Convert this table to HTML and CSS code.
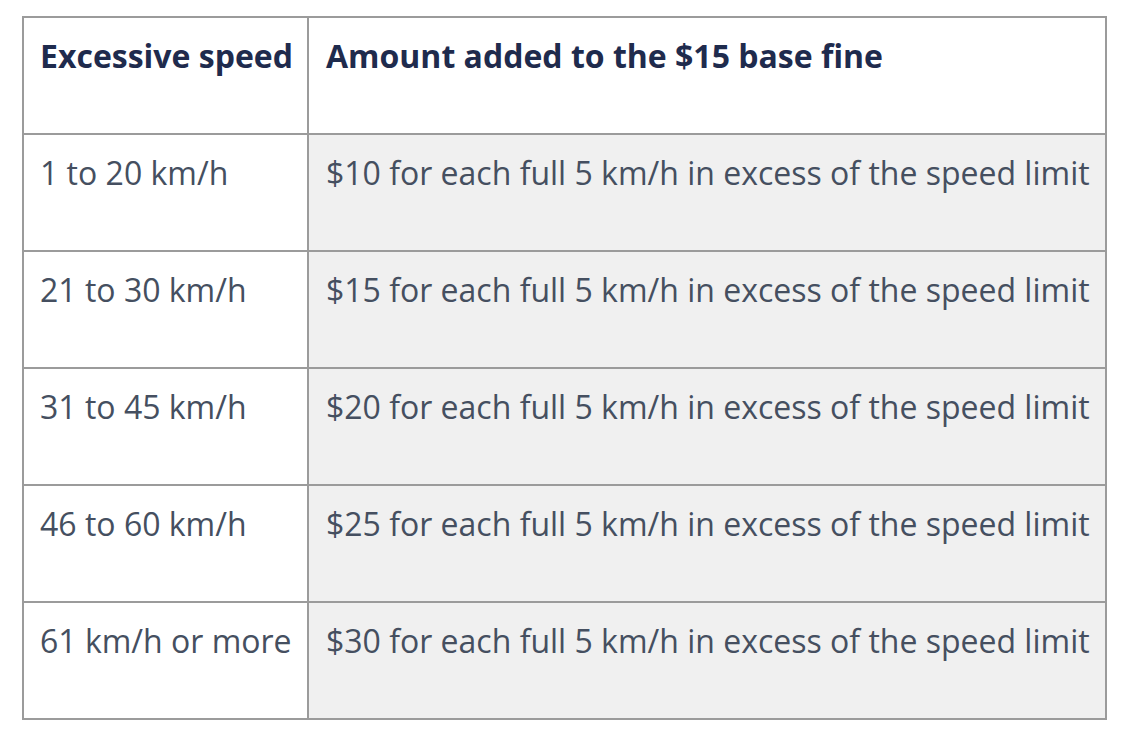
FILE: index.html
```html
<!DOCTYPE html>
<html>
<head>
<meta charset="utf-8">
<link rel="stylesheet" href="styles.css">
</head>
<body>
<table class="fines">
  <thead>
    <tr>
      <th class="col-speed">Excessive speed</th>
      <th class="col-amt">Amount added to the $15 base fine</th>
    </tr>
  </thead>
  <tbody>
    <tr><td class="speed">1 to 20 km/h</td><td class="amt">$10 for each full 5 km/h in excess of the speed limit</td></tr>
    <tr><td class="speed">21 to 30 km/h</td><td class="amt">$15 for each full 5 km/h in excess of the speed limit</td></tr>
    <tr><td class="speed">31 to 45 km/h</td><td class="amt">$20 for each full 5 km/h in excess of the speed limit</td></tr>
    <tr><td class="speed">46 to 60 km/h</td><td class="amt">$25 for each full 5 km/h in excess of the speed limit</td></tr>
    <tr><td class="speed">61 km/h or more</td><td class="amt">$30 for each full 5 km/h in excess of the speed limit</td></tr>
  </tbody>
</table>
</body>
</html>
```

FILE: styles.css
```css
html, body {
  margin: 0;
  background: #ffffff;
}
body {
  padding: 16px 0 0 22px;
  font-family: "Open Sans", "Noto Sans", sans-serif;
}
.fines {
  border-collapse: collapse;
  border: 2px solid #9b9b9b;
}
.fines th,
.fines td {
  border: 2px solid #9b9b9b;
  text-align: left;
  vertical-align: top;
  font-size: 32px;
  line-height: 48px;
  padding: 14px 16px 53px 16px;
  white-space: nowrap;
}
.fines th {
  font-weight: 700;
  color: #1f2b4d;
  background: #ffffff;
}
.fines td {
  color: #454f60;
  background: #ffffff;
}
.fines .col-speed,
.fines .speed {
  padding-right: 14px;
}
.fines .col-amt,
.fines .amt {
  padding-left: 17px;
  padding-right: 15px;
}
.fines td.amt {
  background: #f0f0f0;
}
```
